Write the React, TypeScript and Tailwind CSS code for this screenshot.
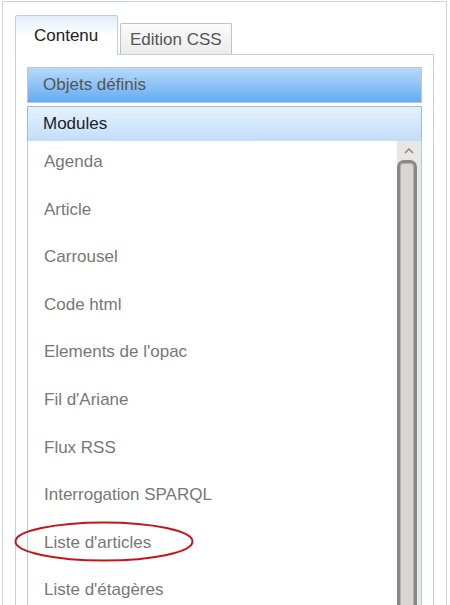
import React from "react";

const items = [
  "Agenda",
  "Article",
  "Carrousel",
  "Code html",
  "Elements de l'opac",
  "Fil d'Ariane",
  "Flux RSS",
  "Interrogation SPARQL",
  "Liste d'articles",
  "Liste d'étagères",
];

export default function App() {
  return (
    <div className="relative w-[450px] h-[605px] overflow-hidden bg-white font-['Liberation_Sans',Arial,sans-serif]">
      <div className="ml-[2px] mt-[1px] w-[445px] h-[700px] border border-[#cfd3db] pl-[12px] pr-[12px] pt-[13px]">
        {/* tabs */}
        <div className="flex items-end h-[39px]">
          <div className="relative z-10 -mb-px h-[40px] w-[103px] border border-b-0 border-[#c3cedb] rounded-t-[2px] bg-gradient-to-b from-[#e3eefa] via-white to-white flex items-center pl-[18px] text-[17px] text-[#222]">
            Contenu
          </div>
          <div className="ml-[2px] h-[31px] w-[112px] border border-b-0 border-[#c2c2c2] rounded-t-[2px] bg-gradient-to-b from-[#fafafa] to-[#ececec] flex items-center pl-[9px] pt-[1px] text-[17px] text-[#555]">
            Edition CSS
          </div>
        </div>
        {/* panel */}
        <div className="h-[600px] border border-[#c8ced8] pl-[11px] pr-[11px] pt-[12px]">
          <div className="h-[36px] border border-[#c3c7cd] bg-gradient-to-b from-[#b6d9fa] to-[#62acf2] flex items-center pl-[15px] text-[17px] text-[#555]">
            Objets définis
          </div>
          <div className="mt-[3px] h-[35px] border border-[#9bbcdc] border-b-0 bg-gradient-to-b from-[#e5f1fd] to-[#c3defa] flex items-center pl-[15px] text-[17px] text-[#222]">
            Modules
          </div>
          <div className="flex h-[520px] border-x border-[#a9cdf1] bg-white">
            <div className="flex-1 flex flex-col">
              {items.map((t) => (
                <div
                  key={t}
                  className="h-[47.6px] shrink-0 flex items-center pl-[16px] pb-[6px] text-[17px] text-[#777]"
                >
                  {t}
                </div>
              ))}
            </div>
            <div className="w-[24px] bg-[#e8e7e5] flex flex-col">
              <div className="h-[19px] flex items-center pl-[7px] pr-[4px]">
                <svg width="10" height="6" viewBox="0 0 10 6">
                  <path d="M1 5 L5 1 L9 5" fill="none" stroke="#8a8887" strokeWidth="1.5" />
                </svg>
              </div>
              <div className="w-[20px] flex-1 border-[3px] border-b-0 border-[#8a8784] rounded-t-[7px] bg-[#d8d6d3] shadow-[inset_0_0_0_1px_#b3b0ad]" />
            </div>
          </div>
        </div>
      </div>
      <svg
        className="absolute left-[14px] top-[521px]"
        width="180"
        height="41"
        viewBox="0 0 180 41"
      >
        <ellipse cx="90" cy="20.5" rx="88.5" ry="19" fill="none" stroke="#c2161c" strokeWidth="2" />
      </svg>
    </div>
  );
}
